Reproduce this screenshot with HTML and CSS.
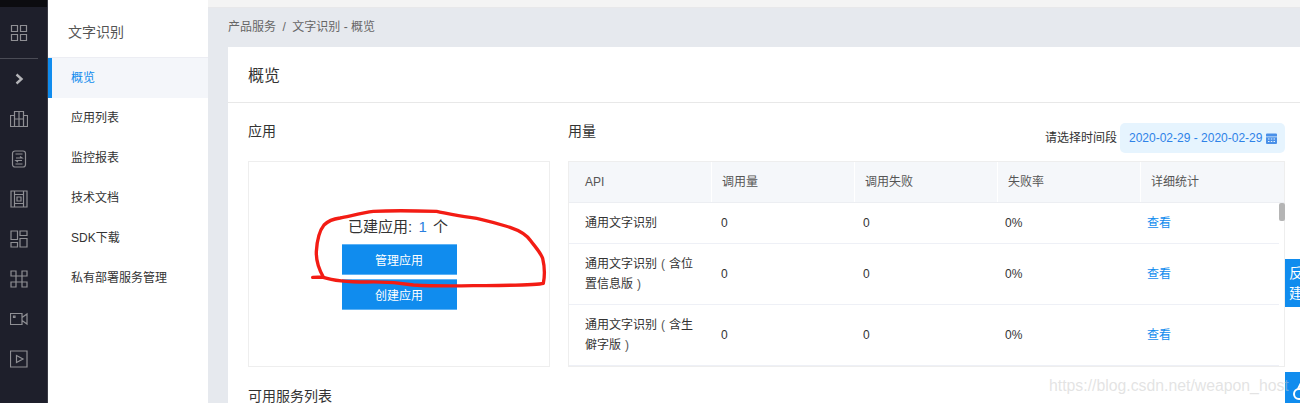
FILE: index.html
```html
<!DOCTYPE html>
<html lang="zh-CN">
<head>
<meta charset="utf-8">
<title>文字识别 - 概览</title>
<link rel="stylesheet" href="styles.css">
</head>
<body>
<div class="page">
  <nav class="rail">
    <div class="rail-top"></div>
    <div class="rail-item rail-first"><svg class="ico" viewBox="0 0 18 18"><path d="M1.500 1.500h6v6h-6zM10.500 1.500h6v6h-6zM1.500 10.500h6v6h-6zM10.500 10.500h6v6h-6z"/></svg></div>
    <div class="rail-sep"></div>
    <div class="rail-item"><svg class="ico ico-chev" viewBox="0 0 18 18"><path d="M6.500 4.500 11.500 9l-5 4.500"/></svg></div>
    <div class="rail-item"><svg class="ico" viewBox="0 0 18 18"><path d="M4.500 1.500h9v15h-9zM4.500 5.500H.5v11h4M13.500 5.500h4v11h-4M4.500 9h9M9 1.500v15"/></svg></div>
    <div class="rail-item"><svg class="ico" viewBox="0 0 18 18"><rect x="2.500" y="1" width="13" height="16" rx="2.500"/><path d="M5.500 4h7M5.500 14h7M6 8h6l-2-1.500M12 10.500H6l2 1.500"/></svg></div>
    <div class="rail-item"><svg class="ico" viewBox="0 0 18 18"><path d="M1 1h16v16H1zM4.500 1v16M13.500 1v16M4.500 4.500h9v9h-9zM7 7h4v4H7z"/></svg></div>
    <div class="rail-item"><svg class="ico" viewBox="0 0 18 18"><path d="M1 1h6.500v8.500H1zM1 12.500h6.500V17H1zM10 1h7v4.500h-7zM10 8.500h7V17h-7z"/></svg></div>
    <div class="rail-item"><svg class="ico" viewBox="0 0 18 18"><path d="M1 1h5v5H1zM12 1h5v5h-5zM1 12h5v5H1zM12 12h5v5h-5zM6 6h6v6H6z"/></svg></div>
    <div class="rail-item"><svg class="ico" viewBox="0 0 18 18"><path d="M.5 3.500h11.500v11H.5zM12 7.500l5-3.500v10l-5-3.500M3.500 6h1.500v1.500H3.500z"/></svg></div>
    <div class="rail-item"><svg class="ico" viewBox="0 0 18 18"><path d="M.5 1h16.500v16H.5zM6.500 5.500 13 9l-6.500 3.500z"/></svg></div>
  </nav>

  <aside class="side">
    <div class="side-title">文字识别</div>
    <ul class="side-list">
      <li class="side-item is-active">概览</li>
      <li class="side-item">应用列表</li>
      <li class="side-item">监控报表</li>
      <li class="side-item">技术文档</li>
      <li class="side-item">SDK下载</li>
      <li class="side-item">私有部署服务管理</li>
    </ul>
  </aside>

  <div class="right">
    <div class="top-strip"></div>
    <main class="main">
      <div class="crumbs">产品服务<span class="crumb-sep">/</span>文字识别 - 概览</div>
      <section class="card">
        <h1 class="card-title">概览</h1>
        <div class="card-body">
          <div class="cols">
            <div class="col-apps">
              <div class="sec-head"><h2 class="sec-title">应用</h2></div>
              <div class="apps-box">
                <p class="apps-count">已建应用: <span class="blue">1</span> 个</p>
                <button class="btn">管理应用</button>
                <button class="btn">创建应用</button>
              </div>
            </div>
            <div class="col-usage">
              <div class="sec-head">
                <h2 class="sec-title">用量</h2>
                <div class="range">
                  <span class="range-label">请选择时间段</span>
                  <span class="range-pill">2020-02-29 - 2020-02-29
                    <svg class="cal" viewBox="0 0 11 11"><path d="M0 1.500a1 1 0 0 1 1-1h9a1 1 0 0 1 1 1V3.500H0z"/><path fill-rule="evenodd" d="M0 4.200h11V10a1 1 0 0 1-1 1H1a1 1 0 0 1-1-1zM2 5.500v1h1.500v-1zM4.800 5.500v1h1.500v-1zM7.500 5.500v1H9v-1zM2 8v1h1.500V8zM4.800 8v1h1.500V8zM7.500 8v1H9V8z"/></svg>
                  </span>
                </div>
              </div>
              <div class="table">
                <div class="thead">
                  <div class="th">API</div><div class="th">调用量</div><div class="th">调用失败</div><div class="th">失败率</div><div class="th">详细统计</div>
                </div>
                <div class="tbody">
                  <div class="rows">
                    <div class="tr"><div class="td td-name">通用文字识别</div><div class="td">0</div><div class="td">0</div><div class="td">0%</div><div class="td"><a class="link">查看</a></div></div>
                    <div class="tr tr-tall"><div class="td td-name">通用文字识别<span class="paren">(</span>含位置信息版<span class="paren">)</span></div><div class="td">0</div><div class="td">0</div><div class="td">0%</div><div class="td"><a class="link">查看</a></div></div>
                    <div class="tr tr-tall"><div class="td td-name">通用文字识别<span class="paren">(</span>含生僻字版<span class="paren">)</span></div><div class="td">0</div><div class="td">0</div><div class="td">0%</div><div class="td"><a class="link">查看</a></div></div>
                  </div>
                  <div class="scroll"><div class="thumb"></div></div>
                </div>
              </div>
            </div>
          </div>
          <h2 class="sec-title sec-services">可用服务列表</h2>
        </div>
      </section>
    </main>
  </div>

  <svg class="scribble" viewBox="0 0 960 759"><path d="M218 382 L250 381 C238 360 228 335 229 305 C231 270 240 240 252 225 C265 212 285 206 300 204 C330 198 370 188 400 184 C440 182 520 182 590 184 C620 190 650 198 690 202 C730 207 770 220 810 232 C840 242 860 255 872 272 C885 290 900 305 908 325 C914 350 914 380 910 400 C890 406 800 406 700 407 C640 408 570 408 520 405 C470 397 420 395 380 396 C330 396 280 392 250 382"/></svg>

  <div class="float-btn float-feedback">反<br>建</div>
  <div class="float-btn float-help"><svg class="help-ico" viewBox="0 0 20 20"><path d="M1 14a5 5 0 1 0 10 0a5 5 0 1 0-10 0zM5 9 9 1"/></svg></div>
  <div class="watermark">https://blog.csdn.net/weapon_host</div>
</div>
</body>
</html>
```
FILE: styles.css
```css
* { box-sizing: border-box; }
html, body { margin: 0; padding: 0; height: 100%; overflow: hidden; }
body {
  font-family: "Liberation Sans", "Noto Sans CJK SC", sans-serif;
  font-size: 12px;
  color: #333;
  background: #fff;
}
h1, h2, p, ul { margin: 0; padding: 0; font-weight: 400; }
ul { list-style: none; }

.page { position: relative; display: flex; width: 1300px; height: 403px; overflow: hidden; }

/* icon rail */
.rail { width: 48px; flex: none; background: #1e1f2b; border-right: 1px solid #3a3b45; }
.rail-top { height: 7px; background: #0c0c10; }
.rail-item { width: 37px; height: 40px; display: flex; align-items: center; justify-content: center; }
.rail-first { height: 50px; margin-top: 1px; }
.rail-sep { width: 38px; height: 1px; background: #4a4b55; }
.ico { width: 18px; height: 18px; fill: none; stroke: #8f8f94; stroke-width: 1.2; }
.ico-chev { stroke: #b4b4b8; stroke-width: 2.4; }

/* secondary sidebar */
.side { width: 160px; flex: none; background: #fff; margin-top: 8px; }
.side-title { height: 50px; padding: 0 20px; line-height: 49px; font-size: 14px; color: #555; border-bottom: 1px solid #ecedf3; }
.side-item { height: 40px; line-height: 41px; padding-left: 23px; color: #333; }
.side-item.is-active { padding-left: 19px; color: #108cee; background: #f4f6fa; border-left: 4px solid #108cee; }

/* main area */
.right { flex: 1; min-width: 0; display: flex; flex-direction: column; }
.top-strip { height: 8px; flex: none; background: #f4f4f4; border-bottom: 1px solid #e8e8ea; }
.main { flex: 1; background: #e6e9ee; padding-left: 20px; }
.crumbs { height: 39px; line-height: 38px; color: #666; }
.crumb-sep { margin: 0 6.5px; }
.card { background: #fff; height: 400px; }
.card-title { height: 56px; line-height: 57px; padding-left: 20px; font-size: 16px; color: #333; border-bottom: 1px solid #e8e8e8; }
.card-body { padding: 19px 15px 0 20px; }
.cols { display: flex; gap: 18px; }
.col-apps { width: 302px; flex: none; }
.col-usage { flex: 1; min-width: 0; }
.sec-head { height: 39px; display: flex; justify-content: space-between; }
.sec-title { font-size: 14px; line-height: 19px; color: #333; }
.sec-services { margin-top: 19px; line-height: 20px; }

.apps-box {
  height: 206px;
  border: 1px solid #eee;
  display: flex;
  flex-direction: column;
  align-items: center;
  padding-top: 55px;
}
.apps-count { font-size: 15px; line-height: 20px; height: 27px; margin-left: -2px; }
.blue { color: #2a7fe0; padding: 0 2px; }
.btn {
  width: 115px;
  height: 31px;
  margin-bottom: 4px;
  background: #108cee;
  border: 0;
  border-top: 1px solid #5db2f5;
  border-bottom: 1px solid #5db2f5;
  color: #fff;
  font: inherit;
  padding: 0;
}

.range { display: flex; align-items: flex-start; margin-top: 1px; }
.range-label { line-height: 30px; margin-right: 3px; }
.range-pill {
  width: 165px;
  height: 30px;
  display: flex;
  align-items: center;
  justify-content: space-between;
  padding: 0 8px 0 9px;
  background: #e6f4fe;
  border-radius: 5px;
  color: #2e82e8;
}
.cal { width: 11px; height: 11px; fill: #4a90e8; flex: none; }

.table { height: 206px; border: 1px solid #eee; }
.thead { display: flex; height: 41px; background: #f5f7fa; border-bottom: 1px solid #eceef2; }
.th { width: 143px; padding-left: 10px; line-height: 41px; color: #555; border-right: 1px solid #fff; }
.th:first-child { padding-left: 16px; }
.th:last-child { flex: 1; border-right: 0; }
.tbody { display: flex; }
.rows { width: 710px; flex: none; }
.tr { display: grid; grid-template-columns: repeat(5, 142px); height: 41px; align-items: center; border-bottom: 1px solid #eef0f6; }
.tr-tall { height: 61px; }
.td { padding-left: 10px; padding-right: 10px; line-height: 20px; color: #333; }
.td-name { padding-left: 16px; }
.paren { display: inline-block; width: 12px; text-align: center; color: #555; }
.link { color: #108cee; }
.scroll { flex: 1; }
.thumb { width: 6px; height: 18px; background: #b5b5b5; border-radius: 2px; }

/* overlays */
.scribble { position: absolute; left: 240px; top: 150px; width: 320px; height: 253px; fill: none; stroke: #f31c14; stroke-width: 10; stroke-linejoin: round; stroke-linecap: round; }
.float-btn { position: absolute; left: 1285px; width: 15px; background: #108cee; color: #fff; overflow: hidden; }
.float-feedback { top: 259px; height: 48px; padding: 4px 0 0 4px; font-size: 14px; line-height: 20px; }
.float-help { top: 372px; height: 31px; }
.help-ico { position: absolute; left: 8px; top: 8px; width: 20px; height: 20px; fill: none; stroke: #fff; stroke-width: 2; }
.watermark { position: absolute; left: 1049px; top: 376px; font-size: 15.8px; line-height: 20px; color: rgba(200, 200, 200, 0.5); white-space: nowrap; }
```
